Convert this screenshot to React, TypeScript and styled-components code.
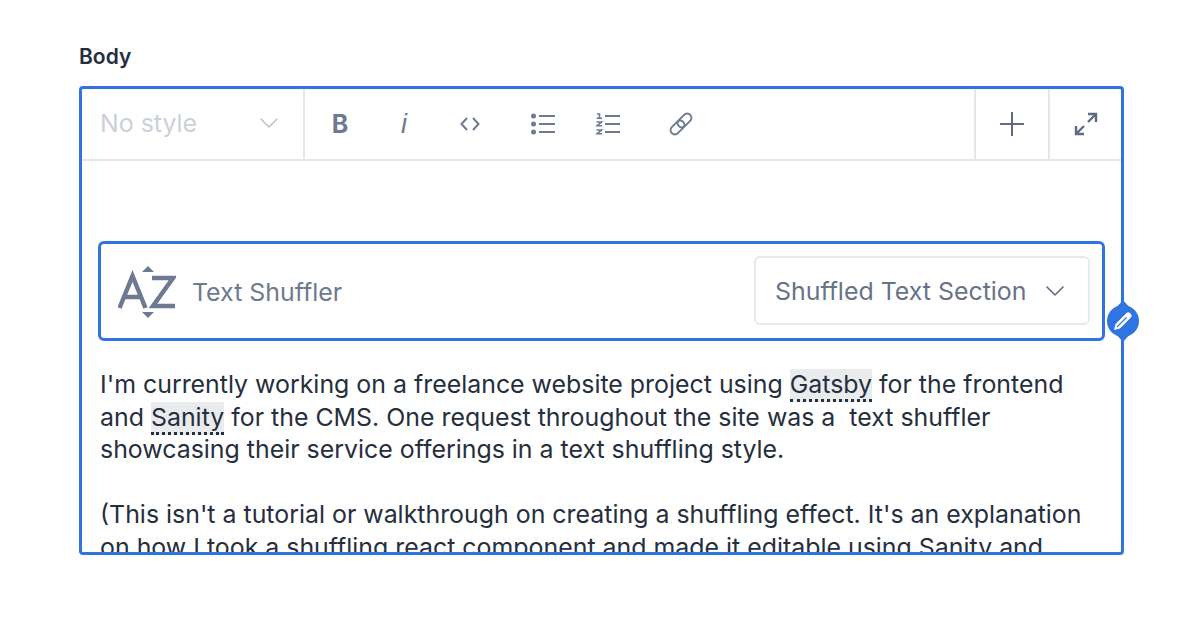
import styled, { createGlobalStyle } from "styled-components";
import { ChevronDown } from "lucide-react";

const GlobalStyle = createGlobalStyle`
  html, body {
    margin: 0;
    padding: 0;
    background: #fff;
    font-family: Inter, "Noto Sans", sans-serif;
  }
`;

const Page = styled.div`
  width: 1200px;
  height: 629px;
  box-sizing: border-box;
  padding: 45px 76px 0 79px;
  overflow: hidden;
`;

const FieldLabel = styled.div`
  font-size: 21px;
  line-height: 24px;
  font-weight: 600;
  color: #262f3d;
  margin-bottom: 18px;
`;

const Editor = styled.div`
  position: relative;
  box-sizing: border-box;
  height: 469px;
  margin-top: -1px;
  border: 3px solid #2f74e0;
  border-radius: 4px;
  background: #fff;
`;

const Content = styled.div`
  height: 463px;
  overflow: hidden;
`;

const Toolbar = styled.div`
  display: flex;
  align-items: stretch;
  height: 70px;
  border-bottom: 2px solid #e4e6e8;
`;

const StyleSelect = styled.div`
  display: flex;
  align-items: center;
  justify-content: space-between;
  width: 223px;
  box-sizing: border-box;
  padding: 0 18px 2px 18px;
  border-right: 2px solid #e4e6e8;
  font-size: 24.9px;
  color: #cbd0d9;
  svg {
    color: #bcc2cd;
  }
`;

const ToolGroup = styled.div`
  flex: 1;
  display: flex;
  align-items: center;
`;

const ToolButton = styled.div<{ $width: number }>`
  width: ${(p) => p.$width}px;
  display: flex;
  align-items: center;
  justify-content: center;
  color: #6e7a93;
`;

const BoldGlyph = styled.span`
  font-size: 25px;
  font-weight: 700;
  color: #6e7a93;
`;

const ItalicGlyph = styled.span`
  font-family: "Liberation Sans", sans-serif;
  font-size: 27px;
  font-style: italic;
  color: #6e7a93;
`;

const EndButton = styled.div<{ $width: number }>`
  width: ${(p) => p.$width}px;
  display: flex;
  align-items: center;
  justify-content: center;
  border-left: 2px solid #e4e6e8;
  color: #5f6b85;
`;

const Body = styled.div`
  padding: 80px 16px 0 16px;
`;

const Block = styled.div`
  display: flex;
  align-items: center;
  justify-content: space-between;
  box-sizing: border-box;
  height: 100px;
  border: 3px solid #2f74e0;
  border-radius: 6px;
  padding: 0 12px 0 17px;
`;

const BlockTitle = styled.div`
  display: flex;
  align-items: center;
  gap: 16px;
  font-size: 24.9px;
  color: #6e7a8e;
  padding-top: 1px;
  svg {
    flex-shrink: 0;
  }
`;

const SectionSelect = styled.div`
  display: flex;
  align-items: center;
  justify-content: space-between;
  box-sizing: border-box;
  width: 336px;
  height: 69px;
  margin-bottom: 2px;
  border: 2px solid #e8e9ec;
  border-radius: 6px;
  padding: 2px 17px 0 19px;
  font-size: 24.9px;
  color: #677389;
  svg {
    color: #5f6b85;
  }
`;

const Paragraph = styled.p`
  margin: 27px 0 32.5px 2px;
  font-size: 24.9px;
  line-height: 32.5px;
  color: #262f3d;
  white-space: pre-wrap;
`;

const Marked = styled.span`
  background: #e9ebed;
  border-bottom: 3px dotted #262f3d;
`;

const EditHandle = styled.div`
  position: absolute;
  right: -18px;
  top: 216px;
  width: 32px;
  height: 32px;
  border-radius: 50%;
  background: #2f74e0;
  display: flex;
  align-items: center;
  justify-content: center;
  color: #fff;
  &::before,
  &::after {
    content: "";
    position: absolute;
    left: 9px;
    border-left: 7px solid transparent;
    border-right: 7px solid transparent;
  }
  &::before {
    top: -5px;
    border-bottom: 8px solid #2f74e0;
  }
  &::after {
    bottom: -5px;
    border-top: 8px solid #2f74e0;
  }
`;

const App = () => {
  return (
    <>
      <GlobalStyle />
      <Page>
        <FieldLabel>Body</FieldLabel>
        <Editor>
          <Content>
            <Toolbar>
              <StyleSelect>
                No style
                <ChevronDown size={32} strokeWidth={1.2} />
              </StyleSelect>
              <ToolGroup>
                <ToolButton $width={70}>
                  <BoldGlyph>B</BoldGlyph>
                </ToolButton>
                <ToolButton $width={58}>
                  <ItalicGlyph>i</ItalicGlyph>
                </ToolButton>
                <ToolButton $width={74}>
                  <svg width="20" height="16" viewBox="0 0 20 16" fill="none" stroke="currentColor" strokeWidth="2">
                    <path d="M7 2 1.500 8 7 14M13 2l5.500 6L13 14" />
                  </svg>
                </ToolButton>
                <ToolButton $width={72}>
                  <svg width="24" height="22" viewBox="0 0 24 22" fill="none" stroke="currentColor" strokeWidth="2">
                    <path d="M8 3h16M8 11h16M8 19h16" />
                    <g fill="currentColor" stroke="none">
                      <circle cx="2.500" cy="3" r="2.500" />
                      <circle cx="2.500" cy="11" r="2.500" />
                      <circle cx="2.500" cy="19" r="2.500" />
                    </g>
                  </svg>
                </ToolButton>
                <ToolButton $width={58}>
                  <svg width="24" height="22" viewBox="0 0 24 22" fill="none" stroke="currentColor" strokeWidth="2">
                    <path d="M9 3h15M9 11h15M9 19h15" />
                    <path strokeWidth="1.600" d="M1 1h2.500v4M0.500 5.200h5.500M0.500 9h5L1 12.800h5M0.500 17h5L1 20.800h5" />
                  </svg>
                </ToolButton>
                <ToolButton $width={88}>
                  <svg width="26" height="24" viewBox="0 0 26 24" fill="none" stroke="currentColor" strokeWidth="2">
                    <rect x="8.500" y="4.250" width="16" height="8.500" rx="4.250" transform="rotate(-45 16.500 8.500)" />
                    <rect x="1.500" y="11.250" width="16" height="8.500" rx="4.250" transform="rotate(-45 9.500 15.500)" />
                  </svg>
                </ToolButton>
              </ToolGroup>
              <EndButton $width={72}>
                <svg width="26" height="26" viewBox="0 0 26 26" fill="none" stroke="currentColor" strokeWidth="2">
                  <path d="M13 1v24M1 13h24" />
                </svg>
              </EndButton>
              <EndButton $width={71}>
                <svg width="24" height="24" viewBox="0 0 24 24" fill="none" stroke="currentColor" strokeWidth="2.400">
                  <path d="M14 2h8v8M22 2l-8 8M2 14v8h8M2 22l8-8" />
                </svg>
              </EndButton>
            </Toolbar>
            <Body>
              <Block>
                <BlockTitle>
                  <svg width="58" height="54" viewBox="0 0 58 54" fill="none" stroke="#6e7a93" strokeWidth="4.500">
                    <path d="M1.500 43 14.500 11l13 32M6.500 32h16" />
                    <path d="M34 13h21L35 41h22" />
                    <path d="M24 7l6-6 6 6z" fill="#6e7a93" stroke="none" />
                    <path d="M24 47h12l-6 6z" fill="#6e7a93" stroke="none" />
                  </svg>
                  Text Shuffler
                </BlockTitle>
                <SectionSelect>
                  Shuffled Text Section
                  <ChevronDown size={32} strokeWidth={1.2} />
                </SectionSelect>
              </Block>
              <Paragraph>
                I'm currently working on a freelance website project using <Marked>Gatsby</Marked> for the frontend and{" "}
                <Marked>Sanity</Marked> for the CMS. One request throughout the site was a  text shuffler showcasing their service offerings in a text shuffling style.
              </Paragraph>
              <Paragraph>
                (This isn't a tutorial or walkthrough on creating a shuffling effect. It's an explanation on how I took a shuffling react component and made it editable using Sanity and
              </Paragraph>
            </Body>
          </Content>
          <EditHandle>
            <svg width="20" height="20" viewBox="0 0 20 20">
              <path d="M1 19l1.500-6L13.500 2a2.400 2.400 0 0 1 3.400 0l1 1a2.400 2.400 0 0 1 0 3.400L7 17.500z" fill="#fff" />
              <path d="M3.800 16.200 13.500 6.500" stroke="#2f74e0" strokeWidth="1.200" />
            </svg>
          </EditHandle>
        </Editor>
      </Page>
    </>
  );
};

export default App;
